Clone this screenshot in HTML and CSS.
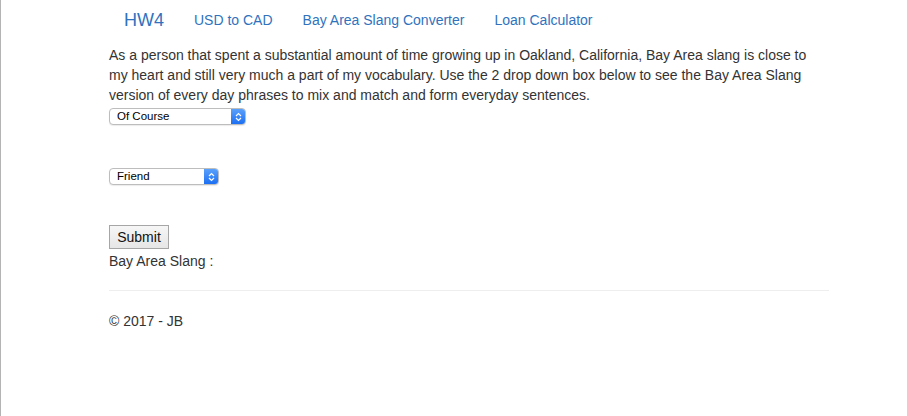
FILE: index.html
```html
<!DOCTYPE html>
<html>
<head>
<meta charset="utf-8">
<title>Bay Area Slang Converter</title>
<link rel="stylesheet" href="styles.css">
</head>
<body>
<div class="navbar">
  <div class="container nav-inner">
    <a class="brand" href="#">HW4</a>
    <ul class="nav">
      <li><a href="#">USD to CAD</a></li>
      <li><a href="#">Bay Area Slang Converter</a></li>
      <li><a href="#">Loan Calculator</a></li>
    </ul>
  </div>
</div>
<div class="container body-content">
  <div class="intro">As a person that spent a substantial amount of time growing up in Oakland, California, Bay Area slang is close to my heart and still very much a part of my vocabulary. Use the 2 drop down box below to see the Bay Area Slang version of every day phrases to mix and match and form everyday sentences.</div>
  <div class="form-line">
    <span class="sel sel-1"><select><option>Of Course</option></select><span class="arrow"><svg width="7" height="10" viewBox="0 0 7 10"><path d="M1 4 L3.5 1.5 L6 4 M1 6 L3.5 8.5 L6 6" fill="none" stroke="#fff" stroke-width="1.2"/></svg></span></span>
  </div>
  <div class="spacer"></div>
  <div class="form-line">
    <span class="sel sel-2"><select><option>Friend</option></select><span class="arrow"><svg width="7" height="10" viewBox="0 0 7 10"><path d="M1 4 L3.5 1.5 L6 4 M1 6 L3.5 8.5 L6 6" fill="none" stroke="#fff" stroke-width="1.2"/></svg></span></span>
  </div>
  <div class="spacer"></div>
  <div class="btn-line"><button class="submit">Submit</button></div>
  <div class="result">Bay Area Slang :</div>
  <hr>
  <footer><p>© 2017 - JB</p></footer>
</div>
</body>
</html>
```
FILE: styles.css
```css
html, body {
  margin: 0;
  padding: 0;
}
body {
  font-family: "Liberation Sans", Arial, sans-serif;
  font-size: 14px;
  line-height: 20px;
  color: #333;
  background: #fff;
  border-left: 1px solid #b4b4b4;
  min-height: 416px;
  box-sizing: border-box;
}
.container {
  width: 750px;
  box-sizing: border-box;
  padding: 0 15px;
  margin-left: 93px;
}
.navbar {
  height: 45px;
}
.nav-inner {
  display: flex;
  align-items: center;
  height: 40px;
}
.brand {
  font-size: 18px;
  color: #2f73be;
  text-decoration: none;
  padding: 0 15px;
  line-height: 20px;
}
.nav {
  display: flex;
  list-style: none;
  margin: 0;
  padding: 0;
}
.nav a {
  display: block;
  padding: 0 15px;
  color: #2f73be;
  text-decoration: none;
  font-size: 14px;
}
.intro {
  margin: 0;
  max-width: 712px;
}
.form-line {
  height: 20px;
  display: flex;
  align-items: center;
}
.spacer {
  height: 40px;
}
.sel {
  display: inline-flex;
  height: 17px;
  box-sizing: border-box;
  border: 1px solid #bdbdbd;
  border-radius: 4px;
  overflow: hidden;
  background: #fff;
  box-shadow: 0 1px 1px rgba(0,0,0,0.08);
  margin-top: 3px;
}
.sel-1 { width: 137px; }
.sel-2 { width: 110px; }
.sel select {
  -webkit-appearance: none;
  appearance: none;
  border: 0;
  background: transparent;
  font-family: "Liberation Sans", Arial, sans-serif;
  font-size: 11.5px;
  color: #000;
  padding: 0 0 0 7px;
  margin: 0;
  flex: 1;
  height: 15px;
  line-height: 15px;
  outline: none;
}
.arrow {
  width: 14px;
  background: linear-gradient(#5aa1fb, #1d6ff3);
  display: flex;
  align-items: center;
  justify-content: center;
}
.btn-line {
  height: 26px;
}
.submit {
  font-family: "Liberation Sans", Arial, sans-serif;
  font-size: 14px;
  color: #111;
  width: 60px;
  height: 24px;
  padding: 0;
  margin: 0;
  border: 1px solid #a6a6a6;
  border-radius: 0;
  background: linear-gradient(#f6f6f6, #e6e6e6);
}
.result {
  line-height: 20px;
}
hr {
  margin: 19px 0 20px;
  border: 0;
  border-top: 1px solid #eee;
  height: 0;
}
footer p {
  margin: 0;
}
```
